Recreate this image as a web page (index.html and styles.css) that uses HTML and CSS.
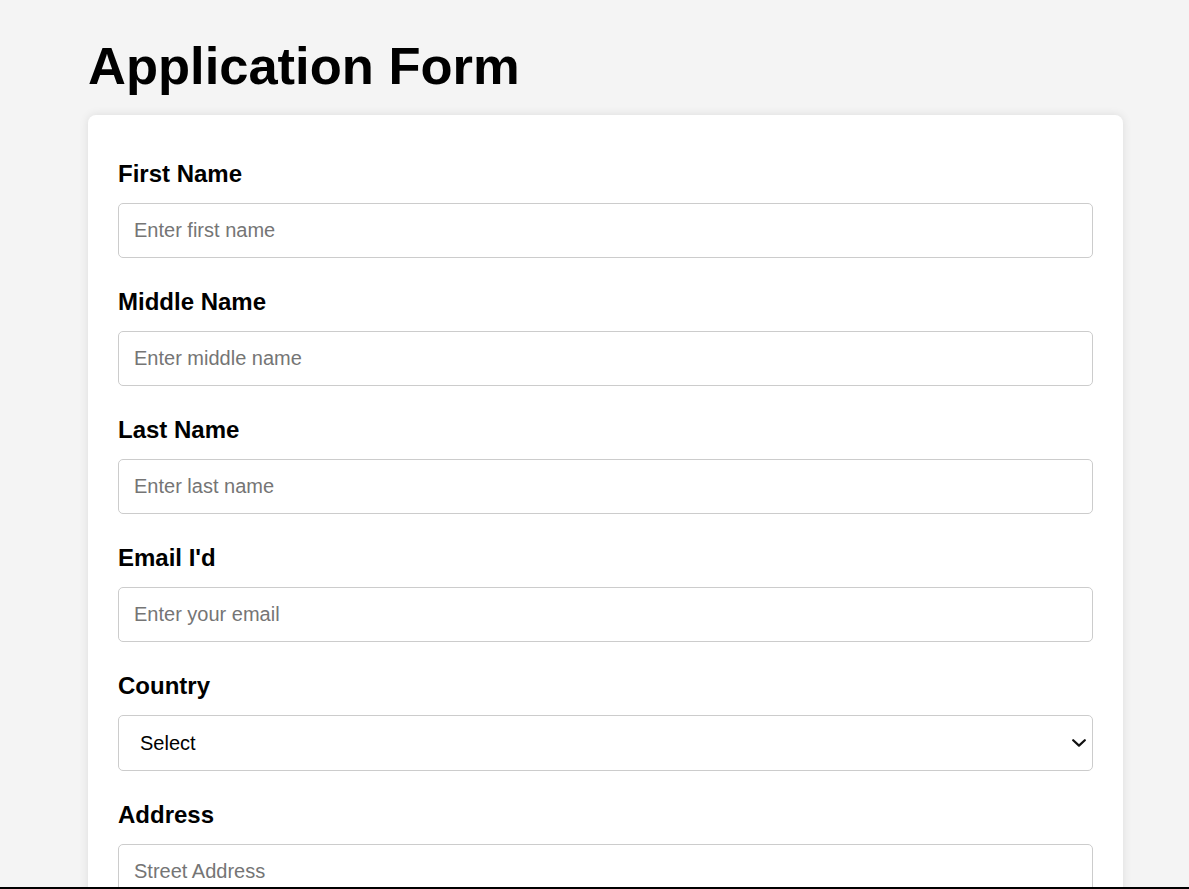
FILE: index.html
```html
<!DOCTYPE html>
<html lang="en">
<head>
<meta charset="utf-8">
<title>Application Form</title>
<link rel="stylesheet" href="styles.css">
</head>
<body>
<div class="page">
  <h1 class="title">Application Form</h1>
  <form class="card">
    <label class="label" for="fn">First Name</label>
    <input class="field" id="fn" type="text" placeholder="Enter first name">
    <label class="label" for="mn">Middle Name</label>
    <input class="field" id="mn" type="text" placeholder="Enter middle name">
    <label class="label" for="ln">Last Name</label>
    <input class="field" id="ln" type="text" placeholder="Enter last name">
    <label class="label" for="em">Email I'd</label>
    <input class="field" id="em" type="email" placeholder="Enter your email">
    <label class="label" for="co">Country</label>
    <div class="select-wrap">
      <select class="field select" id="co">
        <option>Select</option>
        <option>India</option>
        <option>USA</option>
      </select>
      <svg class="chevron" width="14" height="8" viewBox="0 0 14 8" aria-hidden="true">
        <path d="M1.2 1.2 L7 6.6 L12.8 1.2" fill="none" stroke="#111" stroke-width="2.2" stroke-linecap="round" stroke-linejoin="round"/>
      </svg>
    </div>
    <label class="label" for="ad">Address</label>
    <input class="field" id="ad" type="text" placeholder="Street Address">
    <input class="field" type="text" placeholder="City">
  </form>
</div>
<div class="edge"></div>
</body>
</html>
```
FILE: styles.css
```css
html, body {
  margin: 0;
  padding: 0;
}
body {
  background: #f4f4f4;
  font-family: "Liberation Sans", Arial, sans-serif;
  color: #000;
}
.page {
  padding: 37px 0 40px 88px;
  width: 1035px;
}
.title {
  margin: 0 0 20px 0;
  font-size: 52.5px;
  line-height: 58px;
  font-weight: bold;
}
.card {
  display: flex;
  flex-direction: column;
  background: #fff;
  border-radius: 8px;
  box-shadow: 0 0 10px rgba(0, 0, 0, 0.1);
  padding: 30px;
}
.label {
  display: block;
  margin: 15px 0;
  font-size: 24px;
  line-height: 28px;
  font-weight: bold;
}
.field {
  box-sizing: border-box;
  width: 100%;
  height: 55px;
  margin: 0 0 15px 0;
  padding: 0 15px;
  border: 1px solid #ccc;
  border-radius: 5px;
  font-family: "Liberation Sans", Arial, sans-serif;
  font-size: 20px;
  color: #000;
  background: #fff;
}
.field::placeholder {
  color: #757575;
}
.select-wrap {
  position: relative;
}
.select {
  display: block;
  height: 56px;
  padding: 0 30px 0 21px;
  appearance: none;
  -webkit-appearance: none;
}
.chevron {
  position: absolute;
  right: 7px;
  top: 24px;
  pointer-events: none;
}
.edge {
  position: fixed;
  left: 0;
  right: 0;
  bottom: 0;
  height: 2px;
  background: #000;
}
```
